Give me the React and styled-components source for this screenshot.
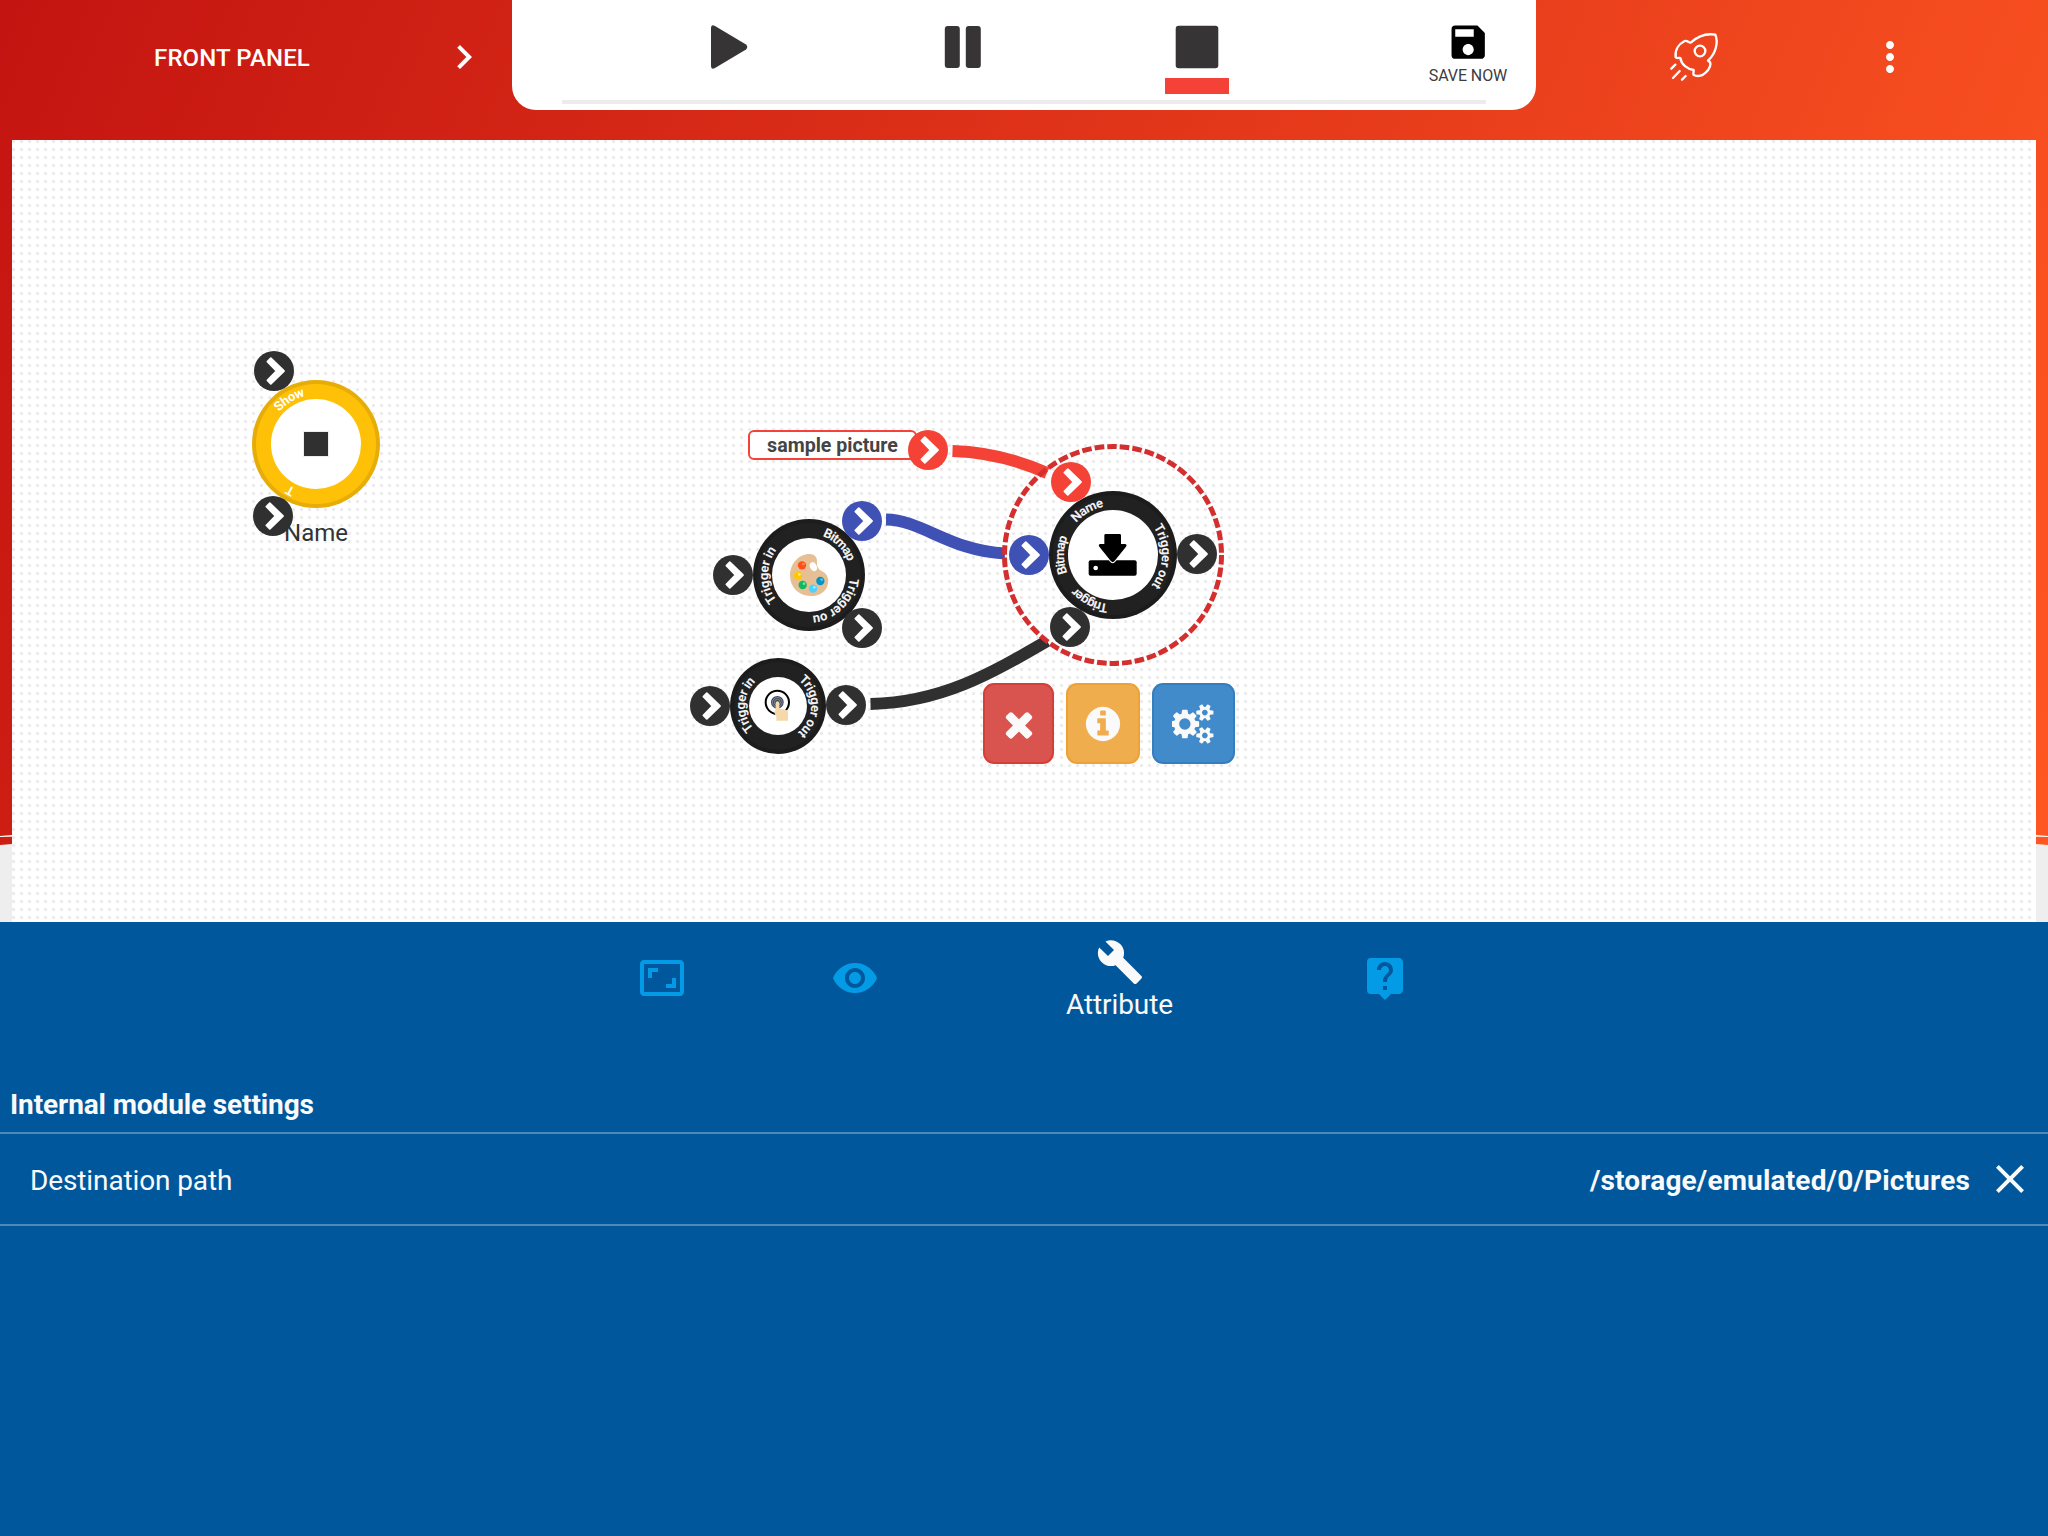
import React from 'react';
import styled, { createGlobalStyle } from 'styled-components';
import {
  MdChevronRight, MdSave, MdMoreVert, MdAspectRatio, MdVisibility, MdBuild, MdLiveHelp, MdClose,
} from 'react-icons/md';

const GlobalStyle = createGlobalStyle`
  * { box-sizing: border-box; }
  body { margin: 0; font-family: Roboto, sans-serif; overflow: hidden; }
  svg { display: block; flex: none; }
`;

const Screen = styled.div`
  width: 2048px;
  height: 1536px;
  display: flex;
  flex-direction: column;
`;

const Workspace = styled.main`
  height: 922px;
  display: flex;
  flex-direction: column;
  background:
    linear-gradient(90deg, transparent, #fff) 0 835px / 12px 1px no-repeat,
    linear-gradient(90deg, #fff, #ffffffaa) 0 836px / 12px 1px no-repeat,
    linear-gradient(270deg, transparent, #fff) 100% 835px / 12px 1px no-repeat,
    linear-gradient(270deg, #fff, #ffffffaa) 100% 836px / 12px 1px no-repeat,
    linear-gradient(90deg, transparent, #eeeeee) 0 844px / 12px 1px no-repeat,
    linear-gradient(270deg, transparent, #eeeeee) 100% 844px / 12px 1px no-repeat,
    linear-gradient(112.4deg, #c41411, #ff5722) 0 0 / 100% 845px no-repeat,
    #eeeeee;
`;

const Header = styled.header`
  height: 140px;
  display: grid;
  grid-template-columns: 512px 1024px 512px;
  color: #fff;
`;

const PanelSwitch = styled.div`
  height: 114px;
  padding: 0 24px;
  display: flex;
  align-items: center;
`;

const PanelTitle = styled.div`
  flex: 1;
  padding-top: 2px;
  text-align: center;
  font-size: 24px;
  font-weight: 500;
  letter-spacing: 0.12px;
`;

const Transport = styled.div`
  height: 110px;
  padding-bottom: 6px;
  display: flex;
  flex-direction: column;
  background: #fff;
  border-radius: 0 0 24px 24px;
`;

const Controls = styled.div`
  flex: 1;
  padding-left: 100px;
  display: flex;
`;

const Control = styled.div`
  width: 234px;
  padding-top: 23px;
  display: flex;
  flex-direction: column;
  align-items: center;
  gap: 7px;
`;

const ActiveMark = styled.div`
  width: 64px;
  height: 16px;
  background: #f44336;
`;

const SaveControl = styled.div`
  width: 136px;
  margin-left: auto;
  padding-top: 20px;
  display: flex;
  flex-direction: column;
  align-items: center;
  color: #000;
`;

const SaveLabel = styled.div`
  margin-top: 2px;
  font-size: 16px;
  line-height: 20px;
  letter-spacing: -0.08px;
  color: #3c3c3c;
`;

const Progress = styled.div`
  height: 4px;
  margin: 0 50px;
  background: #ececec;
`;

const HeaderActions = styled.div`
  height: 114px;
  padding-left: 126px;
  display: flex;
  align-items: center;
  gap: 140px;
`;

const Canvas = styled.section`
  flex: 1;
  margin: 0 12px;
  position: relative;
  background:
    radial-gradient(circle at 1.5px 1.5px, #e8e8e8 0.6px, #f2f2f2 1.6px, #fff 2.2px) 0 0 / 8px 8px,
    #fff;
`;

const Wires = styled.svg`
  position: absolute;
  inset: 0;
`;

const NodeBox = styled.div`
  position: absolute;
  left: ${(p) => p.$x - p.$r - 12}px;
  top: ${(p) => p.$y - p.$r - 140}px;
  width: ${(p) => p.$r * 2}px;
  height: ${(p) => p.$r * 2}px;
`;

const PortDot = styled.div`
  position: absolute;
  left: ${(p) => p.$x - 32}px;
  top: ${(p) => p.$y - 160}px;
  width: 40px;
  height: 40px;
  border-radius: 50%;
  background: ${(p) => p.$color};
`;

const NodeLabel = styled.div`
  position: absolute;
  left: 244px;
  top: 379px;
  width: 120px;
  text-align: center;
  font-size: 24px;
  line-height: 28px;
  color: #333;
`;

const ValueTag = styled.div`
  position: absolute;
  left: 736px;
  top: 290px;
  width: 169px;
  height: 30px;
  border: 2px solid #f44336;
  border-radius: 6px;
  background: #fff;
  color: #444;
  font-size: 19.6px;
  line-height: 28px;
  font-weight: 700;
  text-align: center;
`;

const NodeActions = styled.div`
  position: absolute;
  left: 971px;
  top: 543px;
  display: flex;
  gap: 12px;
`;

const ActionButton = styled.button`
  width: ${(p) => p.$width}px;
  height: 81px;
  padding: 0;
  display: flex;
  align-items: center;
  justify-content: center;
  border: 2px solid ${(p) => p.$edge};
  border-radius: 11px;
  background: ${(p) => p.$fill};
`;

const Inspector = styled.section`
  flex: 1;
  background: #01579b;
  color: #fafafa;
  font-size: 28px;
`;

const Tabs = styled.nav`
  height: 112px;
  margin-bottom: 42px;
  padding-right: 2px;
  display: flex;
  justify-content: center;
`;

const Tab = styled.div`
  width: ${(p) => (p.$active ? 337 : 193)}px;
  padding-top: ${(p) => (p.$active ? 16 : 32)}px;
  display: flex;
  flex-direction: column;
  align-items: center;
  color: ${(p) => (p.$active ? '#fafafa' : '#039be5')};
`;

const TabLabel = styled.div`
  line-height: 33px;
  margin-top: 2px;
  letter-spacing: -0.1px;
`;

const SectionTitle = styled.h2`
  height: 58px;
  margin: 0;
  padding-left: 10px;
  display: flex;
  align-items: center;
  font-size: 28px;
  font-weight: 700;
  letter-spacing: -0.12px;
  border-bottom: 2px solid #4d89b9;
`;

const SettingRow = styled.div`
  height: 92px;
  padding: 0 14px 0 30px;
  display: flex;
  align-items: center;
  border-bottom: 2px solid #4d89b9;
`;

const SettingName = styled.div`
  padding-top: 2px;
  letter-spacing: -0.12px;
`;

const SettingValue = styled.div`
  margin-left: auto;
  margin-right: 16px;
  padding-top: 2px;
  font-weight: 700;
  letter-spacing: 0.17px;
`;

const RocketIcon = () => (
  <svg width="64" height="64" viewBox="726 75 192 192" fill="none" stroke="#fff" strokeWidth="7" strokeLinecap="round" strokeLinejoin="round">
    <path d="M812 128C832 110 858 99 886 104C895 126 889 158 864 182C874 186 873 198 865 209C852 225 836 232 821 225C818 220 822 215 821 210C802 207 784 194 781 174C776 172 771 177 767 172C764 150 776 132 794 123C802 120 806 129 812 128Z" />
    <circle cx="840" cy="153" r="16" />
    <path d="M754 206l12-12M759 234l20-21M786 239l11-11" />
  </svg>
);

const Chevron = () => (
  <svg width="40" height="40" viewBox="-20 -20 40 40">
    <path d="M-6.6-9.4L-3.2-12.8L10 0L-3.2 12.8L-6.6 9.4L2.6 0Z" fill="#fff" stroke="#fff" strokeWidth="1.8" strokeLinejoin="round" />
  </svg>
);

const Port = ({ x, y, color = '#303030' }) => (
  <PortDot $x={x} $y={y} $color={color}><Chevron /></PortDot>
);

const clockwise = (r) => `M${-r} 0A${r} ${r} 0 0 1 ${r} 0A${r} ${r} 0 0 1 ${-r} 0A${r} ${r} 0 0 1 ${r} 0`;

const Node = ({ id, x, y, r, inner, fill = '#212121', edge = '#1c1c1c', ink = '#f2f2f2', labels, children }) => {
  const base = inner + 4;
  return (
    <NodeBox $x={x} $y={y} $r={r}>
      <svg width={r * 2} height={r * 2} viewBox={`${-r} ${-r} ${r * 2} ${r * 2}`}>
        <circle r={r} fill={edge} />
        <circle r={r - 4} fill={fill} />
        <circle r={inner} fill="#fff" />
        <path id={id} d={clockwise(base)} fill="none" />
        {labels.map(([text, from, to]) => (
          <text key={text} fill={ink} fontFamily="Roboto" fontWeight="700" fontSize="13">
            <textPath
              href={`#${id}`}
              startOffset={((from + 180) * Math.PI * base) / 180}
              textLength={((to - from) * Math.PI * base) / 180}
            >
              {text}
            </textPath>
          </text>
        ))}
        {children}
      </svg>
    </NodeBox>
  );
};

const PaletteArt = () => (
  <g transform="scale(.33333) translate(-207 -465)">
    <path d="M208 402C224 402 232 411 231 426C229 443 238 449 251 457C263 465 266 478 264 491C259 515 238 529 211 528C174 527 150 500 150 466C150 430 178 402 208 402Z" fill="#e6bf94" />
    <ellipse cx="220" cy="440" rx="10" ry="14" fill="#fff" transform="rotate(-25 220 440)" />
    {[[186, 436, '#ff5019', '#ff8a5c'], [174, 467, '#ffc800', '#ffe680'], [188, 495, '#0fb960', '#7fdc9f'], [219, 506, '#4dd2ff', '#a6e8ff'], [241, 483, '#0096c8', '#5cc4e6']].map(([cx, cy, c, h]) => (
      <g key={c}>
        <circle cx={cx} cy={cy} r="12.5" fill={c} />
        <circle cx={cx + 4} cy={cy - 4} r="4" fill={h} />
      </g>
    ))}
  </g>
);

const TouchArt = () => (
  <g transform="scale(.33333) translate(-294 -198)">
    <circle cx="292" cy="187" r="35" fill="#fff" stroke="#000" strokeWidth="6" />
    <circle cx="292" cy="187" r="19" fill="#3d4656" />
    <circle cx="292" cy="187" r="14.500" fill="none" stroke="#a4aebf" strokeWidth="2" />
    <circle cx="292" cy="187" r="9" fill="none" stroke="#a4aebf" strokeWidth="2" />
    <path d="M287 189Q287 184 292 184Q298 184 298 189V206L318 209Q324 211 324 217V242H289V229L284 221V211L287 210Z" fill="#f5d9a8" />
  </g>
);

const DriveArt = () => (
  <g transform="scale(.33333) translate(-400 -405)">
    <rect x="327" y="421" width="144" height="46" rx="6" />
    <path d="M378 342H420Q424 342 424 346V372H437Q443 374 439 380L404 424Q399 429 394 424L359 380Q355 374 361 372H374V346Q374 342 378 342Z" stroke="#fff" strokeWidth="6" paintOrder="stroke" />
    <circle cx="348" cy="444" r="7" fill="#fff" />
  </g>
);

const Glyph = ({ width = 1792, d }) => (
  <svg width={(width * 40) / 1792} height="40" viewBox={`0 0 ${width} 1792`} fill="#fafafa"><path d={d} /></svg>
);

const TIMES = 'M1490 1322q0 40-28 68l-136 136q-28 28-68 28t-68-28l-294-294-294 294q-28 28-68 28t-68-28l-136-136q-28-28-28-68t28-68l294-294-294-294q-28-28-28-68t28-68l136-136q28-28 68-28t68 28l294 294 294-294q28-28 68-28t68 28l136 136q28 28 28 68t-28 68l-294 294 294 294q28 28 28 68z';
const INFO = 'M1152 1376v-160q0-14-9-23t-23-9h-96v-512q0-14-9-23t-23-9h-320q-14 0-23 9t-9 23v160q0 14 9 23t23 9h96v320h-96q-14 0-23 9t-9 23v160q0 14 9 23t23 9h448q14 0 23-9t9-23zm-128-896v-160q0-14-9-23t-23-9h-192q-14 0-23 9t-9 23v160q0 14 9 23t23 9h192q14 0 23-9t9-23zm640 416q0 209-103 385.5t-279.5 279.5-385.5 103-385.5-103-279.5-279.5-103-385.5 103-385.5 279.5-279.5 385.5-103 385.5 103 279.5 279.5 103 385.5z';
const SMALL_COG = 'v140q0 16-149 31-12 27-30 52 51 113 51 138 0 4-4 7-122 71-124 71-8 0-46-47t-52-68q-20 2-30 2t-30-2q-14 21-52 68t-46 47q-2 0-124-71-4-3-4-7 0-25 51-138-18-25-30-52-149-15-149-31v-140q0-16 149-31 13-29 30-52-51-113-51-138 0-4 4-7 4-2 35-20t59-34 30-16q8 0 46 46.5t52 67.5q20-2 30-2t30 2q51-71 92-112l6-2q4 0 124 70 4 3 4 7 0 25-51 138 17 23 30 52 149 15 149 31z';
const COGS = `M832 896q0-106-75-181t-181-75-181 75-75 181 75 181 181 75 181-75 75-181zm768 512q0-52-38-90t-90-38-90 38-38 90q0 53 37.5 90.5t90.5 37.5 90.5-37.5 37.5-90.5zm0-1024q0-52-38-90t-90-38-90 38-38 90q0 53 37.5 90.5t90.5 37.5 90.5-37.5 37.5-90.5zm-384 421v185q0 10-7 19.5t-16 10.5l-155 24q-11 35-32 76 34 48 90 115 7 11 7 20 0 12-7 19-23 30-82.5 89.5t-78.5 59.5q-11 0-21-7l-115-90q-37 19-77 31-11 108-23 155-7 24-30 24h-186q-11 0-20-7.5t-10-17.5l-23-153q-34-10-75-31l-118 89q-7 7-20 7-11 0-21-8-144-133-144-160 0-9 7-19 10-14 41-53t47-61q-23-44-35-82l-152-24q-10-1-17-9.5t-7-19.5v-185q0-10 7-19.5t16-10.5l155-24q11-35 32-76-34-48-90-115-7-11-7-20 0-12 7-20 22-30 82-89t79-59q11 0 21 7l115 90q34-18 77-32 11-108 23-154 7-24 30-24h186q11 0 20 7.5t10 17.5l23 153q34 10 75 31l118-89q8-7 20-7 11 0 21 8 144 133 144 160 0 8-7 19-12 16-42 54t-45 60q23 48 34 82l152 23q10 2 17 10.5t7 19.5zm640 533${SMALL_COG}m0-1024${SMALL_COG}`;

export default function App() {
  return (
    <Screen>
      <GlobalStyle />
      <Workspace>
        <Header>
          <PanelSwitch>
            <PanelTitle>FRONT PANEL</PanelTitle>
            <MdChevronRight size={48} />
          </PanelSwitch>
          <Transport>
            <Controls>
              <Control>
                <svg width="48" height="48" fill="#363435"><path d="M6 5Q6 1 10 3L41 21.500Q43.500 24 41 26.500L10 45Q6 47 6 43Z" /></svg>
              </Control>
              <Control>
                <svg width="48" height="48" fill="#363435">
                  <rect x="5.800" y="3" width="15" height="42" rx="3" />
                  <rect x="26.800" y="3" width="15" height="42" rx="3" />
                </svg>
              </Control>
              <Control>
                <svg width="48" height="48" fill="#363435"><rect x="2.700" y="2.700" width="42.600" height="42.600" rx="3" /></svg>
                <ActiveMark />
              </Control>
              <SaveControl>
                <MdSave size={44.4} />
                <SaveLabel>SAVE NOW</SaveLabel>
              </SaveControl>
            </Controls>
            <Progress />
          </Transport>
          <HeaderActions>
            <RocketIcon />
            <MdMoreVert size={48} />
          </HeaderActions>
        </Header>

        <Canvas>
          <Wires width="2024" height="782" viewBox="12 140 2024 782" fill="none" strokeWidth="12">
            <path d="M952.500 451C984 452 1018 460 1047 473" stroke="#f44336" />
            <path d="M886 519.500C922 520 950 551 1005 553.500" stroke="#3f51b5" />
            <path d="M870.500 704C942 702.500 992 673 1047 641" stroke="#303030" />
            <circle cx="1113" cy="555" r="108.500" stroke="#d32f2f" strokeWidth="5" strokeDasharray="9.600 3.024" />
          </Wires>

          <NodeLabel>Name</NodeLabel>
          <Node id="ring-show" x={316} y={444} r={64} inner={45} fill="#ffc107" edge="#e6ad08" ink="#fff" labels={[['Show', -139, -103], ['T', 114, 122]]}>
            <rect x="-12" y="-12" width="24" height="24" fill="#303030" stroke="#eee" strokeWidth="2" paintOrder="stroke" />
          </Node>
          <Port x={274} y={371} />
          <Port x={273} y={516} />

          <ValueTag>sample picture</ValueTag>
          <Port x={928} y={450} color="#f44336" />

          <Node id="ring-palette" x={809} y={575} r={56} inner={37} labels={[['Bitmap', -71, -19], ['Trigger ou', 4, 85], ['Trigger in', 141, 217]]}>
            <PaletteArt />
          </Node>
          <Port x={732.5} y={575} />
          <Port x={862} y={521} color="#3f51b5" />
          <Port x={862} y={628} />

          <Node id="ring-touch" x={778} y={706} r={48} inner={29} labels={[['Trigger in', 136, 227], ['Trigger out', -52, 53]]}>
            <TouchArt />
          </Node>
          <Port x={710} y={706} />
          <Port x={846} y={705} />

          <Node id="ring-save" x={1113} y={555} r={64} inner={45} labels={[['Name', -139, -101], ['Trigger out', -35, 38], ['Trigger', 95, 138], ['Bitmap', 158, 201]]}>
            <DriveArt />
          </Node>
          <Port x={1071} y={482} color="#f44336" />
          <Port x={1029} y={555} color="#3f51b5" />
          <Port x={1070} y={627} />
          <Port x={1197} y={554} />

          <NodeActions>
            <ActionButton $width={71} $fill="#d9534f" $edge="#d43f3a" aria-label="Delete"><Glyph d={TIMES} /></ActionButton>
            <ActionButton $width={74} $fill="#f0ad4e" $edge="#eea236" aria-label="Info"><Glyph d={INFO} /></ActionButton>
            <ActionButton $width={83} $fill="#428bca" $edge="#357ebd" aria-label="Settings"><Glyph width={1920} d={COGS} /></ActionButton>
          </NodeActions>
        </Canvas>
      </Workspace>

      <Inspector>
        <Tabs>
          <Tab><MdAspectRatio size={48} /></Tab>
          <Tab><MdVisibility size={48} /></Tab>
          <Tab $active><MdBuild size={48} /><TabLabel>Attribute</TabLabel></Tab>
          <Tab><MdLiveHelp size={48} /></Tab>
        </Tabs>
        <SectionTitle>Internal module settings</SectionTitle>
        <SettingRow>
          <SettingName>Destination path</SettingName>
          <SettingValue>/storage/emulated/0/Pictures</SettingValue>
          <MdClose size={48} />
        </SettingRow>
      </Inspector>
    </Screen>
  );
}
